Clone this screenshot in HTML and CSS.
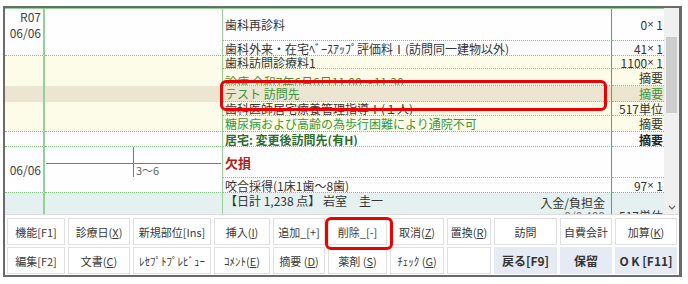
FILE: index.html
```html
<!DOCTYPE html>
<html lang="ja">
<head>
    <meta charset="UTF-8">
    <title>カルテ入力</title>
    <link rel="stylesheet" href="styles.css">
</head>
<body>
    <div class="frame">
        <div class="sheet">
            <div class="rows">
                <div class="row h32 bg-w">
                    <div class="c1"><div>R07</div><div>06/06</div></div>
                    <div class="c2"></div>
                    <div class="c3">歯科再診料</div>
                    <div class="c4">0<span class="x">×</span> 1</div>
                </div>
                <div class="row h15 bg-w g-end">
                    <div class="c1"></div><div class="c2"></div>
                    <div class="c3">歯科外来・在宅ﾍﾞｰｽｱｯﾌﾟ評価料Ⅰ(訪問同一建物以外)</div>
                    <div class="c4">41<span class="x">×</span> 1</div>
                </div>
                <div class="row h13 bg-c">
                    <div class="c1"></div><div class="c2"></div>
                    <div class="c3">歯科訪問診療料1</div>
                    <div class="c4">1100<span class="x">×</span> 1</div>
                </div>
                <div class="row h17 bg-c">
                    <div class="c1"></div><div class="c2"></div>
                    <div class="c3 low green">診療 令和7年6月6日11:00～11:30</div>
                    <div class="c4">摘要</div>
                </div>
                <div class="row h16 bg-sel">
                    <div class="c1"></div><div class="c2"></div>
                    <div class="c3 green">テスト 訪問先</div>
                    <div class="c4 green">摘要</div>
                </div>
                <div class="row h14 bg-c">
                    <div class="c1"></div><div class="c2"></div>
                    <div class="c3">歯科医師居宅療養管理指導Ⅰ(１人)</div>
                    <div class="c4">517単位</div>
                </div>
                <div class="row h16 bg-c g-end">
                    <div class="c1"></div><div class="c2"></div>
                    <div class="c3 green">糖尿病および高齢の為歩行困難により通院不可</div>
                    <div class="c4">摘要</div>
                </div>
                <div class="row h15 bg-w g-end">
                    <div class="c1"></div><div class="c2"></div>
                    <div class="c3 strong-green">居宅: 変更後訪問先(有H)</div>
                    <div class="c4 bold">摘要</div>
                </div>
                <div class="row h31 bg-w">
                    <div class="c1"><div>06/06</div></div>
                    <div class="c2">
                        <!-- 歯式 -->
                        <svg class="chart" width="177" height="31" viewBox="0 0 177 31">
                            <line x1="1" y1="16.5" x2="176" y2="16.5" stroke="#7a7a7a" stroke-width="1"/>
                            <line x1="88.5" y1="0" x2="88.5" y2="30" stroke="#7a7a7a" stroke-width="1"/>
                            <text x="91" y="28" font-size="11" fill="#666" font-family="Noto Sans CJK JP, sans-serif">3～6</text>
                        </svg>
                    </div>
                    <div class="c3 red">欠損</div>
                    <div class="c4"></div>
                </div>
                <div class="row h15 bg-w g-end">
                    <div class="c1"></div><div class="c2"></div>
                    <div class="c3">咬合採得(1床1歯～8歯)</div>
                    <div class="c4">97<span class="x">×</span> 1</div>
                </div>
                <div class="row h40 bg-sum">
                    <div class="c1"></div><div class="c2"></div>
                    <div class="c3 sum">
                        <span class="sum-left">【日計 1,238 点】 岩室　圭一</span>
                        <div class="sum-right"><div>入金/負担金</div><div class="grey">0/0 400</div></div>
                    </div>
                    <div class="c4 sum-qty">517単位</div>
                </div>
            </div>
            <div class="scroll">
                <div class="thumb"></div>
                <svg class="arrow" width="8" height="5" viewBox="0 0 8 5"><path d="M1 1 L4 4 L7 1" fill="none" stroke="#666" stroke-width="1.2"/></svg>
            </div>
        </div>

        <div class="pad">
            <div class="btn">機能[F1]</div>
            <div class="btn">診療日(<u>X</u>)</div>
            <div class="btn">新規部位[Ins]</div>
            <div class="btn">挿入(<u>I</u>)</div>
            <div class="btn">追加_[+]</div>
            <div class="btn">削除_[-]</div>
            <div class="btn">取消(<u>Z</u>)</div>
            <div class="btn">置換(<u>R</u>)</div>
            <div class="btn">訪問</div>
            <div class="btn">自費会計</div>
            <div class="btn">加算(<u>K</u>)</div>

            <div class="btn">編集[F2]</div>
            <div class="btn">文書(<u>C</u>)</div>
            <div class="btn">ﾚｾﾌﾟﾄﾌﾟﾚﾋﾞｭｰ</div>
            <div class="btn">ｺﾒﾝﾄ(<u>E</u>)</div>
            <div class="btn">摘要 (<u>D</u>)</div>
            <div class="btn">薬剤 (<u>S</u>)</div>
            <div class="btn">ﾁｪｯｸ (<u>G</u>)</div>
            <div class="btn"></div>
            <div class="btn act">戻る[F9]</div>
            <div class="btn act">保留</div>
            <div class="btn act">O K [F11]</div>
        </div>

        <!-- 注目箇所の赤枠 -->
        <div class="mark mark-row"></div>
        <div class="mark mark-btn"></div>
    </div>
</body>
</html>
```

FILE: styles.css
```css
body { margin: 0; background: #fff; font-family: "Noto Sans CJK JP", "Noto Sans", sans-serif; }
.frame { position: relative; width: 679px; margin: 6px 0 0 3px; border: 2px solid #6a6a6a; border-right-width: 3px; box-sizing: border-box; }
.sheet { display: flex; height: 206px; }
.rows { width: 659px; border-top: 1px solid #8fcf8f; overflow: hidden; }

.row { display: flex; box-sizing: border-box; font-size: 12px; line-height: 13px; color: #333; }
.row > div { box-sizing: border-box; flex: none; }
.h13 { height: 13px; } .h14 { height: 14px; } .h15 { height: 15px; } .h16 { height: 16px; }
.h17 { height: 17px; } .h31 { height: 31px; } .h32 { height: 32px; } .h40 { height: 40px; }
.bg-w { background: #fefdff; }
.bg-c { background: #fdfce8; }
.bg-sel { background: #ebe5d1; }
.bg-sum { background: #e5f1f1; }

.c1 { width: 40px; border-right: 2px solid #95d195; padding-right: 2px; display: flex; flex-direction: column; justify-content: flex-end; align-items: flex-end; line-height: 16px; color: #444; }
.c2 { width: 178px; border-right: 1px solid #95d195; }
.c3 { width: 389px; padding-left: 2px; border-right: 1px solid #52a852; border-bottom: 1px dotted #78c878; display: flex; align-items: center; white-space: nowrap; overflow: hidden; }
.c4 { width: 52px; padding-right: 1px; border-bottom: 1px dotted #78c878; display: flex; align-items: center; justify-content: flex-end; white-space: pre; overflow: hidden; }
.c4 .x { font-family: "Liberation Sans", sans-serif; font-size: 11px; }
.g-end .c1, .g-end .c2 { border-bottom: 1px dotted #78c878; }
.bg-sum .c3, .bg-sum .c4 { border-bottom: none; }

.low { align-items: flex-start; padding-top: 6px; }
.green { color: #3a963a; }
.strong-green { color: #2d6e2d; font-weight: bold; }
.red { color: #b3221b; font-weight: bold; font-size: 13px; }
.bold { font-weight: bold; color: #222; }
.chart { display: block; }

.sum { align-items: flex-start; justify-content: space-between; }
.sum-left { margin-top: 1px; }
.sum-right { text-align: right; padding-right: 6px; margin-top: 3px; }
.grey { color: #777; }
.sum-qty { align-items: flex-start; padding-top: 16px; }

.scroll { width: 15px; background: #f0f0f0; display: flex; flex-direction: column; align-items: center; padding-top: 29px; box-sizing: border-box; }
.thumb { width: 11px; height: 76px; background: #cdcdcd; }
.arrow { margin-top: auto; margin-bottom: 4px; }

.pad { border-top: 1px solid #dcdcdc; padding: 3px 0 1px 2px; display: grid; grid-template-columns: 58px 62px 78px 56px 52px 59px 54px 44px 63px 52px 62px; grid-template-rows: 27px 27px; gap: 2px 3px; }
.btn { border: 1px solid #e0e0e0; background: #fff; font-size: 11px; color: #3a3a3a; display: flex; align-items: center; justify-content: center; white-space: nowrap; box-sizing: border-box; }
.btn u { text-underline-offset: 1px; }
.btn.act { background: #e5eaf5; border-color: #e5eaf5; font-weight: bold; font-size: 12px; color: #333; }

.mark { position: absolute; border: 3px solid #ee0000; border-radius: 6px; box-sizing: border-box; }
.mark-row { left: 215px; top: 72px; width: 387px; height: 31px; }
.mark-btn { left: 320px; top: 209px; width: 68px; height: 33px; }
```
